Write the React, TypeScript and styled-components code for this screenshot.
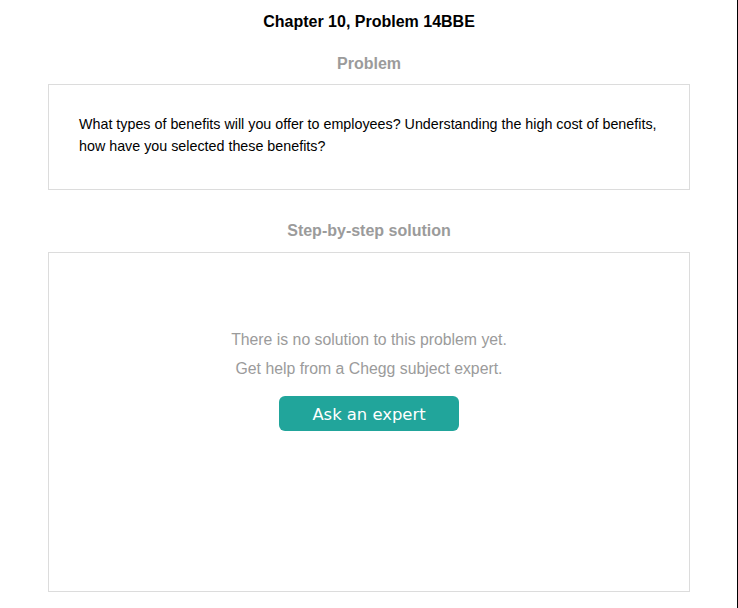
import React from 'react';
import styled, { createGlobalStyle } from 'styled-components';

const GlobalStyle = createGlobalStyle`
  html, body {
    margin: 0;
    padding: 0;
    background: #fff;
  }
  body {
    font-family: 'Liberation Sans', Arial, sans-serif;
  }
`;

const problemText =
  'What types of benefits will you offer to employees? Understanding the high cost of benefits, how have you selected these benefits?';

export default function App() {
  return (
    <>
      <GlobalStyle />
      <PageS>
        <TitleS>Chapter 10, Problem 14BBE</TitleS>
        <SectionTitleS>Problem</SectionTitleS>
        <ProblemBoxS>
          <ProblemTextS>{problemText}</ProblemTextS>
        </ProblemBoxS>
        <SectionTitleS $gap={32}>Step-by-step solution</SectionTitleS>
        <SolutionBoxS>
          <EmptyTextS>There is no solution to this problem yet.</EmptyTextS>
          <EmptyTextS>Get help from a Chegg subject expert.</EmptyTextS>
          <AskButtonS type="button">Ask an expert</AskButtonS>
        </SolutionBoxS>
      </PageS>
    </>
  );
}

const PageS = styled.div`
  width: 738px;
  height: 608px;
  box-sizing: border-box;
  border-right: 1px solid #000;
  padding: 13px 47px 0 48px;
  display: flex;
  flex-direction: column;
  align-items: stretch;
`;

const TitleS = styled.h1`
  margin: 0;
  font-size: 16px;
  line-height: 18px;
  font-weight: bold;
  color: #000;
  text-align: center;
`;

const SectionTitleS = styled.h2<{ $gap?: number }>`
  margin: ${(p) => p.$gap ?? 24}px 0 ${(p) => (p.$gap ? 12 : 11)}px;
  font-size: 16px;
  line-height: 18px;
  font-weight: bold;
  color: #9b9b9b;
  text-align: center;
`;

const BoxS = styled.div`
  border: 1px solid #dcdcdc;
  box-sizing: border-box;
  background: #fff;
`;

const ProblemBoxS = styled(BoxS)`
  height: 106px;
  padding: 28px 30px 0 30px;
`;

const ProblemTextS = styled.p`
  margin: 0;
  font-size: 14.3px;
  line-height: 22px;
  color: #000;
`;

const SolutionBoxS = styled(BoxS)`
  height: 340px;
  padding-top: 72px;
  display: flex;
  flex-direction: column;
  align-items: center;
`;

const EmptyTextS = styled.p`
  margin: 0;
  font-size: 15.8px;
  line-height: 29px;
  color: #9b9b9b;
`;

const AskButtonS = styled.button`
  margin-top: 13px;
  width: 180px;
  height: 35px;
  border: 0;
  border-radius: 6px;
  background: #21a59b;
  color: #fff;
  font-family: 'DejaVu Sans', Verdana, sans-serif;
  font-size: 16.4px;
  padding: 2px 0 0;
  cursor: pointer;
`;
